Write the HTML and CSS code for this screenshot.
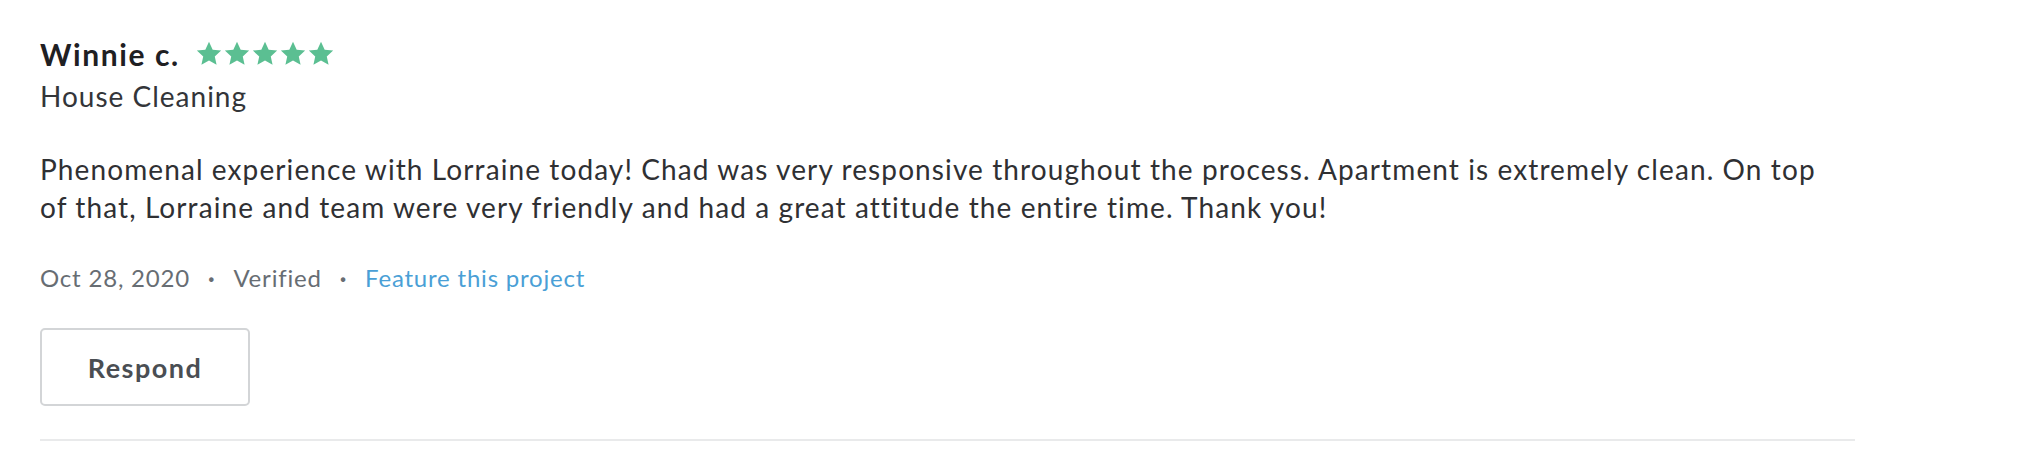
FILE: index.html
```html
<!DOCTYPE html>
<html lang="en">
<head>
<meta charset="utf-8">
<title>Review</title>
<link rel="stylesheet" href="styles.css">
</head>
<body>
<div class="review">
  <div class="head">
    <span class="name">Winnie c.</span>
    <span class="stars" aria-label="5 stars">
      <svg viewBox="0 0 24 24"><path d="M12 1.6l3.15 6.7 7.25.8-5.45 4.95 1.55 7.15L12 17.6l-6.5 3.6 1.55-7.15L1.6 9.1l7.250-.8z"/></svg>
      <svg viewBox="0 0 24 24"><path d="M12 1.6l3.15 6.7 7.25.8-5.45 4.95 1.55 7.15L12 17.6l-6.5 3.6 1.55-7.15L1.6 9.1l7.25-.8z"/></svg>
      <svg viewBox="0 0 24 24"><path d="M12 1.6l3.15 6.7 7.25.8-5.45 4.95 1.55 7.15L12 17.6l-6.5 3.6 1.55-7.15L1.6 9.1l7.25-.8z"/></svg>
      <svg viewBox="0 0 24 24"><path d="M12 1.6l3.15 6.7 7.25.8-5.45 4.95 1.55 7.15L12 17.6l-6.5 3.6 1.55-7.15L1.6 9.1l7.25-.8z"/></svg>
      <svg viewBox="0 0 24 24"><path d="M12 1.6l3.15 6.7 7.25.8-5.45 4.95 1.55 7.15L12 17.6l-6.5 3.6 1.55-7.15L1.6 9.1l7.25-.8z"/></svg>
    </span>
  </div>
  <div class="service">House Cleaning</div>
  <p class="body">Phenomenal experience with Lorraine today! Chad was very responsive throughout the process. Apartment is extremely clean. On top of that, Lorraine and team were very friendly and had a great attitude the entire time. Thank you!</p>
  <div class="meta">
    <span>Oct 28, 2020</span>
    <span class="dot">·</span>
    <span>Verified</span>
    <span class="dot">·</span>
    <a class="feature" href="#">Feature this project</a>
  </div>
  <button class="respond" type="button">Respond</button>
  <div class="divider"></div>
</div>
</body>
</html>
```
FILE: styles.css
```css
html, body {
  margin: 0;
  padding: 0;
  background: #ffffff;
}
body {
  font-family: "Lato", "Inter", "Liberation Sans", sans-serif;
  color: #2f3033;
}
.review {
  width: 1815px;
  padding: 32px 0 0 40px;
}
.head {
  display: flex;
  align-items: center;
  gap: 15px;
  height: 44px;
}
.name {
  font-size: 30px;
  font-weight: 700;
  letter-spacing: 1.6px;
  color: #1f2023;
}
.stars {
  display: flex;
  gap: 0;
}
.stars svg {
  width: 28px;
  height: 28px;
  fill: #5bbf92;
}
.service {
  font-size: 28px;
  line-height: 40px;
  letter-spacing: 1px;
  color: #333539;
}
.body {
  margin: 35px 0 0;
  font-size: 28px;
  line-height: 37.5px;
  letter-spacing: 1.1px;
  color: #2f3033;
  max-width: 1790px;
}
.meta {
  margin-top: 37px;
  display: flex;
  align-items: center;
  gap: 18px;
  font-size: 24px;
  line-height: 30px;
  letter-spacing: 0.8px;
  color: #676d73;
}
.meta .dot {
  font-weight: 700;
}
.feature {
  color: #4a9fd6;
  text-decoration: none;
}
.respond {
  display: block;
  margin-top: 35px;
  width: 210px;
  height: 78px;
  border: 2px solid #d3d5d7;
  border-radius: 5px;
  background: #fff;
  font-family: inherit;
  font-size: 27px;
  font-weight: 700;
  letter-spacing: 1.5px;
  color: #4a4e53;
  padding: 0;
}
.divider {
  margin-top: 33px;
  height: 2px;
  background: #e9eaeb;
}
```
